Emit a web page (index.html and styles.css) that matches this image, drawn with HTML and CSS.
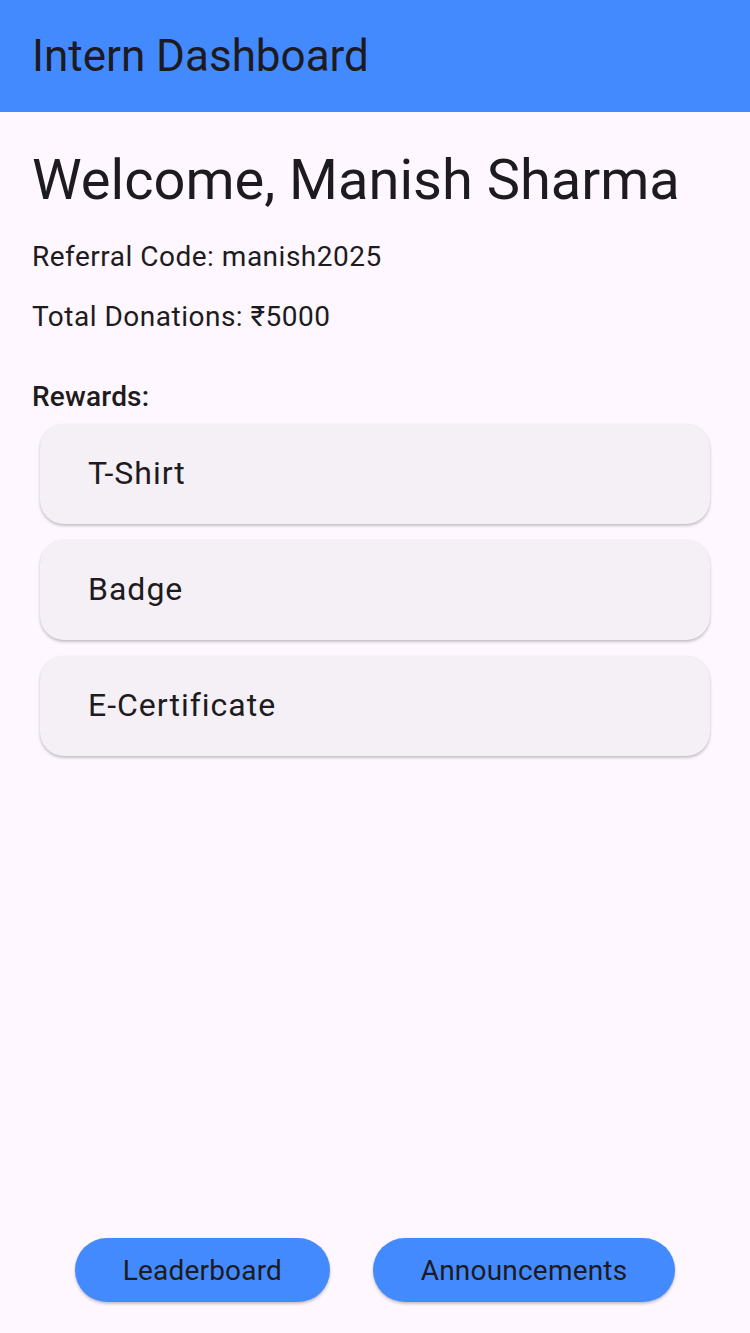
FILE: index.html
```html
<!DOCTYPE html>
<html lang="en">
<head>
<meta charset="utf-8">
<title>Intern Dashboard</title>
<link rel="stylesheet" href="styles.css">
</head>
<body>
<div class="screen">
  <header class="app-bar">
    <h1 class="app-title">Intern Dashboard</h1>
  </header>
  <main class="content">
    <h2 class="welcome">Welcome, Manish Sharma</h2>
    <p class="info">Referral Code: manish2025</p>
    <p class="info">Total Donations: ₹5000</p>
    <h3 class="section-title">Rewards:</h3>
    <ul class="reward-list">
      <li class="reward-card">T-Shirt</li>
      <li class="reward-card">Badge</li>
      <li class="reward-card">E-Certificate</li>
    </ul>
  </main>
  <footer class="actions">
    <button class="pill-btn">Leaderboard</button>
    <button class="pill-btn">Announcements</button>
  </footer>
</div>
</body>
</html>
```
FILE: styles.css
```css
* { box-sizing: border-box; }
html, body {
  margin: 0;
  padding: 0;
  background: #fef7ff;
}
body {
  font-family: Roboto, "Noto Sans", sans-serif;
  color: #1d1b20;
}
.screen {
  display: flex;
  flex-direction: column;
  width: 750px;
  height: 1333px;
}
.app-bar {
  height: 112px;
  background: #448aff;
  display: flex;
  align-items: center;
  padding: 0 32px;
  flex: none;
}
.app-title {
  margin: 0;
  font-size: 44px;
  font-weight: 400;
  line-height: 56px;
  color: #1d1b20;
}
.content {
  flex: 1;
  padding: 32px 32px 0;
  display: flex;
  flex-direction: column;
}
.welcome {
  margin: 0 0 21px;
  font-size: 56px;
  font-weight: 400;
  line-height: 72px;
}
.info {
  margin: 0 0 20px;
  font-size: 28px;
  line-height: 40px;
  letter-spacing: 0.5px;
}
.section-title {
  margin: 20px 0 -1px;
  font-size: 28px;
  font-weight: 500;
  line-height: 40px;
  letter-spacing: 0.2px;
}
.reward-list {
  list-style: none;
  margin: 0;
  padding: 0;
  display: flex;
  flex-direction: column;
}
.reward-card {
  margin: 8px;
  height: 100px;
  border-radius: 24px;
  background: #f4f0f6;
  box-shadow: 0 2px 3px rgba(0, 0, 0, 0.22), 0 0 2px rgba(0, 0, 0, 0.06);
  display: flex;
  align-items: center;
  padding: 0 48px 2px;
  font-size: 32px;
  letter-spacing: 1px;
  line-height: 48px;
}
.actions {
  flex: none;
  display: flex;
  justify-content: space-evenly;
  padding: 0 32px 31px;
}
.pill-btn {
  height: 64px;
  padding: 0 48px;
  border: none;
  border-radius: 32px;
  background: #448aff;
  color: #1d1b20;
  font-family: Roboto, "Noto Sans", sans-serif;
  font-size: 28px;
  font-weight: 400;
  letter-spacing: 0.2px;
  box-shadow: 0 2px 3px rgba(0, 0, 0, 0.22), 0 0 2px rgba(0, 0, 0, 0.06);
}
```
